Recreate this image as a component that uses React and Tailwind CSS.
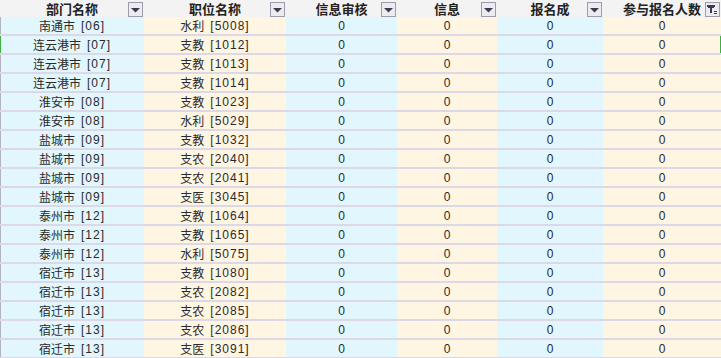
import React from "react";

const rows = [
  ["南通市", "[06]", "水利", "[5008]"],
  ["连云港市", "[07]", "支教", "[1012]"],
  ["连云港市", "[07]", "支教", "[1013]"],
  ["连云港市", "[07]", "支教", "[1014]"],
  ["淮安市", "[08]", "支教", "[1023]"],
  ["淮安市", "[08]", "水利", "[5029]"],
  ["盐城市", "[09]", "支教", "[1032]"],
  ["盐城市", "[09]", "支农", "[2040]"],
  ["盐城市", "[09]", "支农", "[2041]"],
  ["盐城市", "[09]", "支医", "[3045]"],
  ["泰州市", "[12]", "支教", "[1064]"],
  ["泰州市", "[12]", "支教", "[1065]"],
  ["泰州市", "[12]", "水利", "[5075]"],
  ["宿迁市", "[13]", "支教", "[1080]"],
  ["宿迁市", "[13]", "支农", "[2082]"],
  ["宿迁市", "[13]", "支农", "[2085]"],
  ["宿迁市", "[13]", "支农", "[2086]"],
  ["宿迁市", "[13]", "支医", "[3091]"],
];

const headers = ["部门名称", "职位名称", "信息审核", "信息", "报名成", "参与报名人数"];

const latin = { fontFamily: '"Liberation Sans", Arial, sans-serif' };

const FilterButton = ({ active }) => (
  <span className="absolute right-[1px] top-[2px] w-[15px] h-[15px] border border-[#9c9cab] bg-[#ececf0] flex items-center justify-center">
    {active ? (
      <svg width="11" height="11" viewBox="0 0 11 11">
        <rect x="0" y="1" width="8" height="2" fill="#3b3b4f" />
        <rect x="3" y="3" width="2" height="6" fill="#3b3b4f" />
        <rect x="1" y="3" width="2" height="1" fill="#3b3b4f" />
        <rect x="5" y="3" width="2" height="1" fill="#3b3b4f" />
        <rect x="7" y="7" width="3" height="1" fill="#3b3b4f" />
        <rect x="7" y="9" width="3" height="1" fill="#3b3b4f" />
      </svg>
    ) : (
      <svg width="9" height="5" viewBox="0 0 9 5" className="mt-[2px]">
        <polygon points="0,0 9,0 4.5,4.5" fill="#3b3b4f" />
      </svg>
    )}
  </span>
);

const Code = ({ name, code }) => (
  <span className="flex items-center">
    <span className="text-[12px]">{name}</span>
    <span className="text-[12px] ml-[6px] tracking-[1px]" style={latin}>
      {code}
    </span>
  </span>
);

const cols = "grid grid-cols-[144px_142px_111px_100px_106px_118px]";
const bgs = ["bg-[#e1f7fd]", "bg-[#fff5e3]", "bg-[#e1f7fd]", "bg-[#fff5e3]", "bg-[#e1f7fd]", "bg-[#fff5e3]"];

export default function App() {
  return (
    <div
      className="w-[721px] h-[358px] overflow-hidden bg-[#dcd8e8] text-[#2a2a2a]"
      style={{ fontFamily: '"Noto Sans CJK SC", "Liberation Sans", sans-serif' }}
    >
      <div className={`${cols} h-[17px] bg-[#f3f3f3]`}>
        {headers.map((h, i) => (
          <div key={h} className="relative h-[17px] flex items-center justify-center text-[13px] font-bold leading-none text-[#222]">
            {h}
            <FilterButton active={i === 5} />
          </div>
        ))}
      </div>
      {rows.map((r, idx) => (
        <div key={idx} className={`${cols} h-[17px] mb-[2px] relative`}>
          {[
            <Code name={r[0]} code={r[1]} />,
            <Code name={r[2]} code={r[3]} />,
            "0",
            "0",
            "0",
            "0",
          ].map((v, i) => (
            <div
              key={i}
              className={`${bgs[i]} h-[17px] flex items-center justify-center leading-none`}
            >
              {typeof v === "string" ? (
                <span className="text-[12px]" style={latin}>
                  {v}
                </span>
              ) : (
                v
              )}
            </div>
          ))}
          <span
            className={`absolute left-0 top-0 w-[1px] h-[17px] ${idx === 1 ? "bg-[#3cb043]" : "bg-[#b4b4bc]"}`}
          />
          {idx === 1 && <span className="absolute right-0 top-0 w-[1px] h-[17px] bg-[#3cb043]" />}
        </div>
      ))}
    </div>
  );
}
